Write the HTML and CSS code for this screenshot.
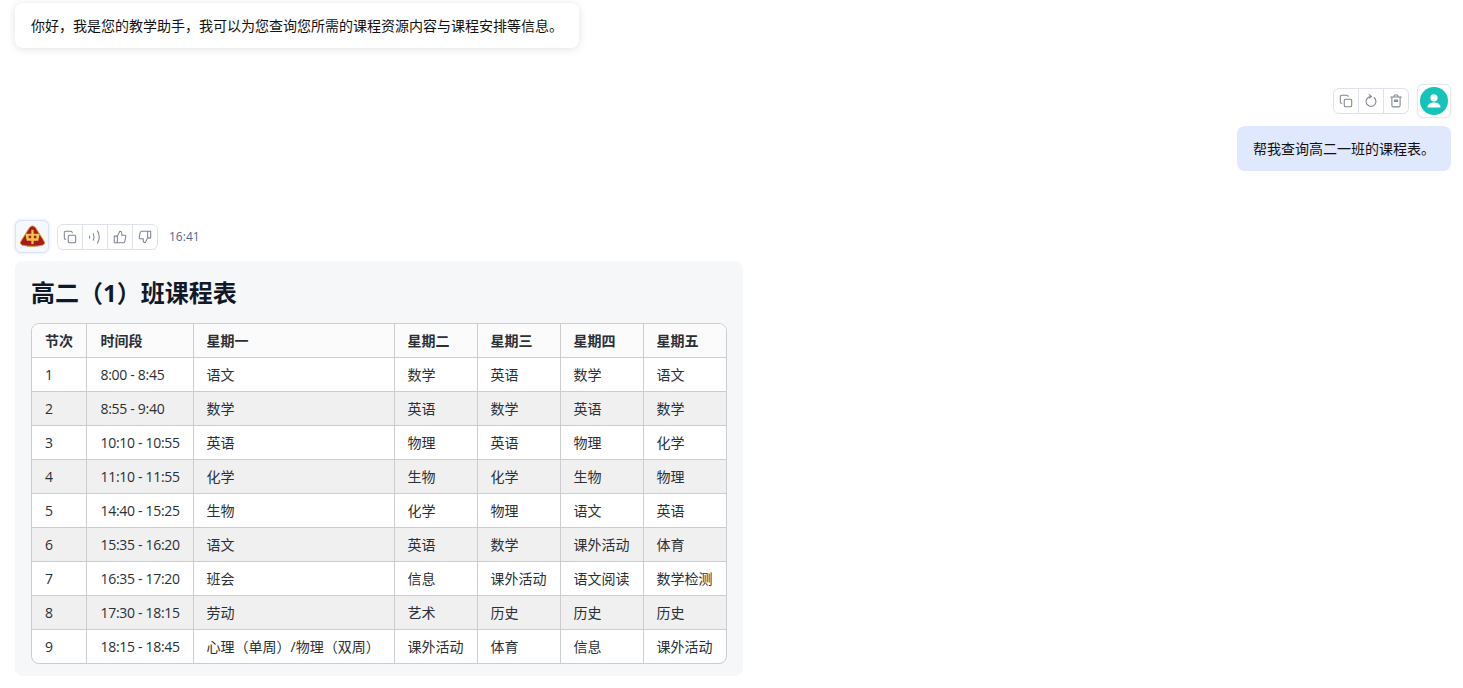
FILE: index.html
```html
<!DOCTYPE html>
<html lang="zh-CN">
<head>
<meta charset="utf-8">
<title>教学助手</title>
<link rel="stylesheet" href="styles.css">
</head>
<body>
<main class="chat">
  <section class="msg msg-first">
    <div class="bubble bubble-white">你好，我是您的教学助手，我可以为您查询您所需的课程资源内容与课程安排等信息。</div>
  </section>
  <section class="msg msg-user">
    <div class="meta meta-user">
      <div class="tools">
        <span class="tool"><svg viewBox="0 0 16 16"><rect x="6" y="6" width="8.500" height="8.500" rx="1.500"/><path d="M10.500 3.200V3A1.500 1.500 0 0 0 9 1.500H3A1.500 1.500 0 0 0 1.500 3v6A1.500 1.500 0 0 0 3 10.500h.2"/></svg></span>
        <span class="tool"><svg viewBox="0 0 16 16"><path d="M8.300 2.800A5.700 5.700 0 1 0 11.500 4"/><path d="M6 .8l2.500 2-2.500 2"/></svg></span>
        <span class="tool"><svg viewBox="0 0 16 16"><path d="M2 3.500h12M5.800 3.500V2a.8.8 0 0 1 .8-.8h2.800a.8.8 0 0 1 .8.800v1.500M3.300 3.500v9.500A1.700 1.700 0 0 0 5 14.700h6a1.700 1.700 0 0 0 1.700-1.700V3.500M6.200 7v1.500h3.600V7z"/></svg></span>
      </div>
      <div class="avatar-box avatar-user">
        <span class="user-dot"><svg viewBox="0 0 28 28"><circle cx="14" cy="10.800" r="3.600"/><path d="M7.500 20.500c0-3.500 3-5 6.500-5s6.500 1.500 6.500 5z"/></svg></span>
      </div>
    </div>
    <div class="bubble bubble-blue">帮我查询高二一班的课程表。</div>
  </section>
  <section class="msg msg-bot">
    <div class="meta">
      <div class="avatar-box avatar-bot">
        <svg class="logo" viewBox="0 0 28 24"><path d="M14 1c1.500 0 2.500 1 3.500 2.300l8.500 13.500c1.300 2.200.5 3.700-1.500 4.200-7 1.700-14 1.700-21 0-2-.5-2.800-2-1.500-4.200l8.500-13.500C11.500 2 12.500 1 14 1z" fill="#a9181a" stroke="#d99a2b" stroke-width="1"/><path d="M6.500 9h15l-1.500 7.500H8z" fill="#f2c44a"/><path d="M10 11.300h3v2.500h-3zM15 11.300h3v2.500h-3z" fill="#a9181a"/><path d="M14 5v15" stroke="#f2c44a" stroke-width="2.400"/></svg>
      </div>
      <div class="tools">
        <span class="tool"><svg viewBox="0 0 16 16"><rect x="6" y="6" width="8.500" height="8.500" rx="1.500"/><path d="M10.500 3.200V3A1.500 1.500 0 0 0 9 1.500H3A1.500 1.500 0 0 0 1.500 3v6A1.500 1.500 0 0 0 3 10.500h.2"/></svg></span>
        <span class="tool"><svg viewBox="0 0 16 16"><path d="M1.800 6.800v2.400M6 4.200c1.200 2.300 1.200 5.300 0 7.600M10.800 1c2.700 4 2.700 10 0 14"/></svg></span>
        <span class="tool"><svg viewBox="0 0 16 16"><path d="M5 7l2.800-5.500c1.400 0 2.200.9 2.200 2.200V6h3.300c1 0 1.500.7 1.300 1.600l-1.200 5.600c-.2.800-.8 1.300-1.600 1.300H5zM5 7H1.500v7.500H5"/></svg></span>
        <span class="tool"><svg viewBox="0 0 16 16"><path d="M11 9l-2.800 5.500c-1.400 0-2.200-.9-2.200-2.200V10H2.700c-1 0-1.500-.7-1.300-1.600l1.200-5.600c.2-.8.8-1.300 1.600-1.300H11zM11 9h3.500V1.500H11"/></svg></span>
      </div>
      <time class="time">16:41</time>
    </div>
    <article class="card">
      <h1 class="title">高二（1）班课程表</h1>
      <div class="table-wrap">
        <table class="schedule">
          <colgroup>
            <col class="c1"><col class="c2"><col class="c3"><col class="c4"><col class="c5"><col class="c6"><col class="c7">
          </colgroup>
          <thead>
            <tr><th>节次</th><th>时间段</th><th>星期一</th><th>星期二</th><th>星期三</th><th>星期四</th><th>星期五</th></tr>
          </thead>
          <tbody>
            <tr><td>1</td><td>8:00 - 8:45</td><td>语文</td><td>数学</td><td>英语</td><td>数学</td><td>语文</td></tr>
            <tr><td>2</td><td>8:55 - 9:40</td><td>数学</td><td>英语</td><td>数学</td><td>英语</td><td>数学</td></tr>
            <tr><td>3</td><td>10:10 - 10:55</td><td>英语</td><td>物理</td><td>英语</td><td>物理</td><td>化学</td></tr>
            <tr><td>4</td><td>11:10 - 11:55</td><td>化学</td><td>生物</td><td>化学</td><td>生物</td><td>物理</td></tr>
            <tr><td>5</td><td>14:40 - 15:25</td><td>生物</td><td>化学</td><td>物理</td><td>语文</td><td>英语</td></tr>
            <tr><td>6</td><td>15:35 - 16:20</td><td>语文</td><td>英语</td><td>数学</td><td>课外活动</td><td>体育</td></tr>
            <tr><td>7</td><td>16:35 - 17:20</td><td>班会</td><td>信息</td><td>课外活动</td><td>语文阅读</td><td>数学检测</td></tr>
            <tr><td>8</td><td>17:30 - 18:15</td><td>劳动</td><td>艺术</td><td>历史</td><td>历史</td><td>历史</td></tr>
            <tr><td>9</td><td>18:15 - 18:45</td><td>心理（单周）/物理（双周）</td><td>课外活动</td><td>体育</td><td>信息</td><td>课外活动</td></tr>
          </tbody>
        </table>
      </div>
    </article>
  </section>
</main>
</body>
</html>
```
FILE: styles.css
```css
* { box-sizing: border-box; }
html, body { margin: 0; padding: 0; height: 100%; overflow: hidden; background: #fff; }
body {
  font-family: "Open Sans", "Noto Sans CJK SC", sans-serif;
  font-size: 14px;
  color: #1f2329;
}
.chat { display: flex; flex-direction: column; padding: 3px 12px 0 15px; }
.msg { display: flex; flex-direction: column; align-items: flex-start; }
.msg-user { align-items: flex-end; margin-top: 36px; }
.msg-bot { margin-top: 49px; }
.bubble { padding: 13px 16px 11px; line-height: 20px; color: #111; border-radius: 8px; }
.bubble-white { background: #fff; width: 564px; height: 45px; white-space: nowrap; box-shadow: 0 1px 8px rgba(0, 0, 0, .12); }
.bubble-blue { background: #e0e8fd; width: 214px; height: 45px; white-space: nowrap; margin-top: 8px; }
.meta { display: flex; align-items: center; gap: 8px; }
.meta-user { height: 34px; }
.tools { display: flex; height: 26px; background: #fff; border: 1px solid #dfe2ea; border-radius: 6px; }
.tool { width: 25px; display: flex; align-items: center; justify-content: center; border-left: 1px solid #dfe2ea; }
.tool:first-child { border-left: 0; width: 24px; }
.tool svg { width: 14px; height: 14px; fill: none; stroke: #7f8591; stroke-width: 1.200; stroke-linecap: round; stroke-linejoin: round; }
.avatar-box { display: flex; align-items: center; justify-content: center; border-radius: 6px; background: #fff; }
.avatar-user { width: 34px; height: 34px; border: 1px solid #e6e8ee; box-shadow: 0 0 2px rgba(0, 0, 0, .08); }
.user-dot { width: 28px; height: 28px; border-radius: 50%; background: #14c4b8; display: block; }
.user-dot svg { display: block; width: 28px; height: 28px; fill: #fff; }
.avatar-bot { width: 34px; height: 33px; border: 1px solid #dde3f3; background: #f5f8ff; box-shadow: 0 0 3px rgba(80, 110, 200, .2); }
.logo { width: 27px; height: 23px; }
.time { font-size: 12px; color: #4f6b8f; margin-left: 3px; }
.card { width: 728px; height: 415px; margin-top: 8px; padding: 16px; background: #f6f7f9; border-radius: 8px; }
.title { margin: 0 0 14px; font-size: 24px; line-height: 32px; font-weight: 700; color: #111827; }
.table-wrap { width: 696px; border: 1px solid #cdcdcd; border-radius: 8px; overflow: hidden; background: #fff; }
.schedule { width: 100%; table-layout: fixed; border-collapse: collapse; }
.c1 { width: 54px; } .c2 { width: 107px; } .c3 { width: 201px; } .c4, .c5, .c6 { width: 83px; } .c7 { width: 84px; }
.schedule th, .schedule td { height: 34px; padding: 0 13px; text-align: left; border-left: 1px solid #cdcdcd; border-top: 1px solid #cdcdcd; color: #2b2f36; white-space: nowrap; font-weight: 400; }
.schedule th:first-child, .schedule td:first-child { border-left: 0; }
.schedule th:nth-child(2), .schedule td:nth-child(2) { padding-left: 14px; }
.schedule td:nth-child(2) { letter-spacing: -.3px; }
.schedule thead th { border-top: 0; height: 33px; font-weight: 700; background: #fbfbfb; }
.schedule tbody tr:nth-child(even) td { background: #f0f0f0; }
```
